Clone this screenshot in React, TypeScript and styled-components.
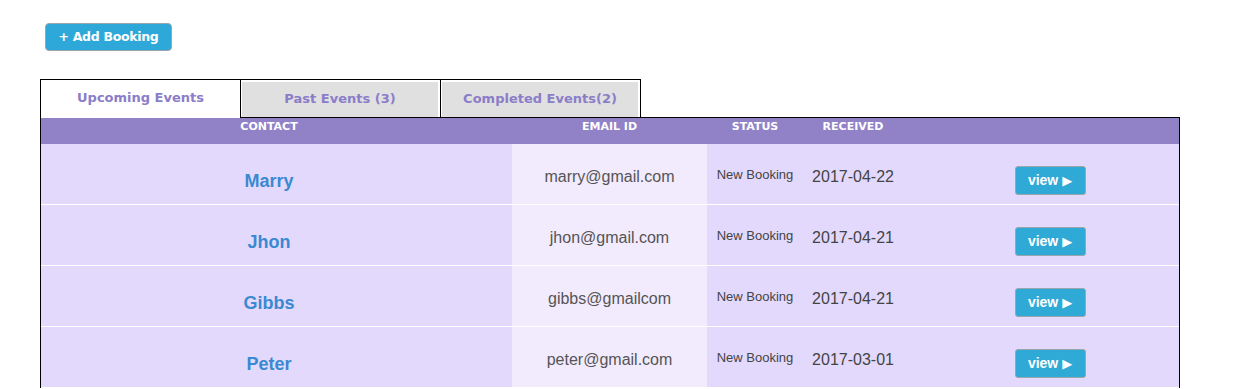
import styled, { createGlobalStyle } from 'styled-components'

const GlobalStyle = createGlobalStyle`
  html, body {
    margin: 0;
    padding: 0;
    background: #fff;
    font-family: 'Liberation Sans', Arial, sans-serif;
  }
`

interface Booking {
  name: string
  email: string
  status: string
  received: string
}

const bookings: Booking[] = [
  { name: 'Marry', email: 'marry@gmail.com', status: 'New Booking', received: '2017-04-22' },
  { name: 'Jhon', email: 'jhon@gmail.com', status: 'New Booking', received: '2017-04-21' },
  { name: 'Gibbs', email: 'gibbs@gmailcom', status: 'New Booking', received: '2017-04-21' },
  { name: 'Peter', email: 'peter@gmail.com', status: 'New Booking', received: '2017-03-01' },
]

const tabs = [
  { label: 'Upcoming Events', active: true },
  { label: 'Past Events (3)', active: false },
  { label: 'Completed Events(2)', active: false },
]

const COLUMNS = '471px 195px 96px 100px 1fr'

const App = () => {
  return (
    <Page>
      <GlobalStyle />
      <AddButton>+ Add Booking</AddButton>
      <Panel>
        <TabBar>
          {tabs.map((t, i) => (
            <Tab key={t.label} $active={t.active} $last={i === tabs.length - 1}>
              <TabInner $active={t.active}>{t.label}</TabInner>
            </Tab>
          ))}
          <TabFiller />
        </TabBar>
        <Table>
          <HeaderRow>
            <HeadCell $pr={15}>CONTACT</HeadCell>
            <HeadCell>EMAIL ID</HeadCell>
            <HeadCell>STATUS</HeadCell>
            <HeadCell>RECEIVED</HeadCell>
            <HeadCell />
          </HeaderRow>
          {bookings.map((b) => (
            <Row key={b.name}>
              <NameCell>{b.name}</NameCell>
              <EmailCell>{b.email}</EmailCell>
              <StatusCell>{b.status}</StatusCell>
              <DateCell>{b.received}</DateCell>
              <ActionCell>
                <ViewButton>
                  view <Arrow>▶</Arrow>
                </ViewButton>
              </ActionCell>
            </Row>
          ))}
        </Table>
      </Panel>
    </Page>
  )
}

const Page = styled.div`
  padding: 23px 0 0 40px;
`

const AddButton = styled.button`
  display: block;
  margin-left: 5px;
  width: 127px;
  height: 28px;
  padding: 0 0 1px;
  background: #2ea8d8;
  border: 1px solid #9aa6ad;
  border-radius: 4px;
  color: #fff;
  font-family: 'DejaVu Sans', Verdana, sans-serif;
  font-weight: bold;
  font-size: 12.5px;
  letter-spacing: -0.3px;
  cursor: pointer;
`

const Panel = styled.div`
  margin-top: 28px;
  width: 1140px;
`

const TabBar = styled.div`
  display: flex;
  height: 39px;
`

const Tab = styled.div<{ $active: boolean; $last: boolean }>`
  box-sizing: border-box;
  width: ${(p) => (p.$last ? 201 : 200)}px;
  border-top: 1px solid #000;
  border-left: 1px solid #000;
  border-right: ${(p) => (p.$last ? '1px solid #000' : 'none')};
  border-bottom: ${(p) => (p.$active ? 'none' : '1px solid #000')};
  background: #fff;
  padding: ${(p) => (p.$active ? '0' : '2px 2px 0 1px')};
  display: flex;
`

const TabInner = styled.div<{ $active: boolean }>`
  flex: 1;
  display: flex;
  align-items: center;
  justify-content: center;
  padding-bottom: ${(p) => (p.$active ? 3 : 2)}px;
  background: ${(p) => (p.$active ? '#fff' : '#e0e0e0')};
  color: #8b7dc8;
  font-family: 'DejaVu Sans', Verdana, sans-serif;
  font-weight: bold;
  font-size: 13px;
`

const TabFiller = styled.div`
  flex: 1;
  border-bottom: 1px solid #000;
`

const Table = styled.div`
  border-left: 1px solid #000;
  border-right: 1px solid #000;
`

const HeaderRow = styled.div`
  display: grid;
  grid-template-columns: ${COLUMNS};
  height: 26px;
  background: #9181c7;
`

const HeadCell = styled.div<{ $pr?: number }>`
  padding-top: 2px;
  padding-right: ${(p) => p.$pr ?? 0}px;
  text-align: center;
  color: #fff;
  font-family: 'DejaVu Sans', Verdana, sans-serif;
  font-weight: bold;
  font-size: 11px;
  line-height: 13px;
`

const Row = styled.div`
  display: grid;
  grid-template-columns: ${COLUMNS};
  height: 60px;
  background: #e2d9fd;
  border-bottom: 1px solid #fff;
`

const Cell = styled.div`
  display: flex;
  align-items: center;
  justify-content: center;
`

const NameCell = styled(Cell)`
  padding: 14px 15px 0 0;
  color: #3b89d1;
  font-weight: bold;
  font-size: 18px;
`

const EmailCell = styled(Cell)`
  padding-top: 5px;
  background: #f2eafd;
  color: #555;
  font-size: 16px;
`

const StatusCell = styled(Cell)`
  padding-top: 1px;
  color: #444;
  font-size: 13px;
`

const DateCell = styled(Cell)`
  padding-top: 5px;
  color: #444;
  font-size: 16px;
`

const ActionCell = styled(Cell)`
  padding: 13px 0 0 18px;
`

const ViewButton = styled.button`
  width: 71px;
  height: 29px;
  padding: 0 0 2px;
  background: #2fa9d6;
  border: 1px solid #9aa6ad;
  border-radius: 3px;
  color: #fff;
  font-family: 'Liberation Sans', Arial, sans-serif;
  font-weight: bold;
  font-size: 14px;
  cursor: pointer;
`

const Arrow = styled.span`
  font-family: 'DejaVu Sans', sans-serif;
  font-size: 13px;
`

export default App
